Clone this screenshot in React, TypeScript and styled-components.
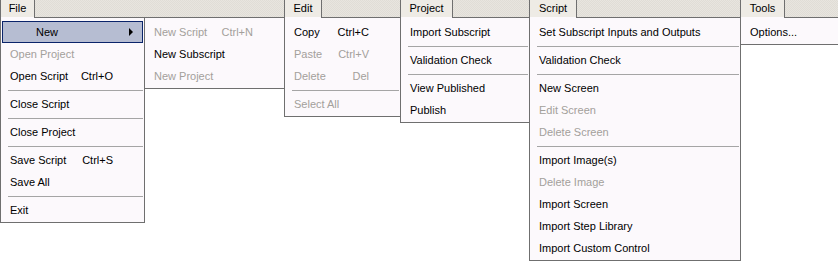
import React from 'react'
import styled, { createGlobalStyle } from 'styled-components'

const GlobalStyle = createGlobalStyle`
  body {
    margin: 0;
    background: #ffffff;
    font-family: "Liberation Sans", Arial, sans-serif;
    font-size: 11px;
    color: #000;
  }
`

interface IEntry {
  label?: string
  keys?: string
  off?: boolean
  sep?: boolean
  hot?: boolean
  sub?: boolean
}

interface IMenu {
  title: string
  tab: number
  width: number
  items: IEntry[]
}

const fileMenu: IMenu = {
  title: 'File',
  tab: 35,
  width: 145,
  items: [
    { label: 'New', hot: true, sub: true },
    { label: 'Open Project', off: true },
    { label: 'Open Script', keys: 'Ctrl+O' },
    { sep: true },
    { label: 'Close Script' },
    { sep: true },
    { label: 'Close Project' },
    { sep: true },
    { label: 'Save Script', keys: 'Ctrl+S' },
    { label: 'Save All' },
    { sep: true },
    { label: 'Exit' },
  ],
}

const newMenu: IEntry[] = [
  { label: 'New Script', keys: 'Ctrl+N', off: true },
  { label: 'New Subscript' },
  { label: 'New Project', off: true },
]

const menus: IMenu[] = [
  {
    title: 'Edit',
    tab: 38,
    width: 117,
    items: [
      { label: 'Copy', keys: 'Ctrl+C' },
      { label: 'Paste', keys: 'Ctrl+V', off: true },
      { label: 'Delete', keys: 'Del', off: true },
      { sep: true },
      { label: 'Select All', off: true },
    ],
  },
  {
    title: 'Project',
    tab: 53,
    width: 130,
    items: [
      { label: 'Import Subscript' },
      { sep: true },
      { label: 'Validation Check' },
      { sep: true },
      { label: 'View Published' },
      { label: 'Publish' },
    ],
  },
  {
    title: 'Script',
    tab: 48,
    width: 212,
    items: [
      { label: 'Set Subscript Inputs and Outputs' },
      { sep: true },
      { label: 'Validation Check' },
      { sep: true },
      { label: 'New Screen' },
      { label: 'Edit Screen', off: true },
      { label: 'Delete Screen', off: true },
      { sep: true },
      { label: 'Import Image(s)' },
      { label: 'Delete Image', off: true },
      { label: 'Import Screen' },
      { label: 'Import Step Library' },
      { label: 'Import Custom Control' },
    ],
  },
  {
    title: 'Tools',
    tab: 45,
    width: 99,
    items: [{ label: 'Options...' }],
  },
]

const Entries = ({ items }: { items: IEntry[] }) => (
  <>
    {items.map((item, i) => {
      if (item.sep) {
        return <Separator key={i} />
      }
      if (item.hot) {
        return (
          <HotItem key={i}>
            <span>{item.label}</span>
            {item.sub && <Arrow />}
          </HotItem>
        )
      }
      return (
        <Item key={i} $off={!!item.off}>
          <span>{item.label}</span>
          {item.keys && <span>{item.keys}</span>}
        </Item>
      )
    })}
  </>
)

export default function App() {
  return (
    <Page>
      <GlobalStyle />
      <Panel>
        <Bar>
          <Tab $w={fileMenu.tab}>{fileMenu.title}</Tab>
        </Bar>
        <DropRow>
          <Box $w={fileMenu.width}>
            <TopEdge $tab={fileMenu.tab} />
            <Entries items={fileMenu.items} />
          </Box>
          <Box $w={141}>
            <TopEdge $tab={0} />
            <Entries items={newMenu} />
          </Box>
        </DropRow>
      </Panel>
      {menus.map(menu => (
        <Panel key={menu.title}>
          <Bar>
            <Tab $w={menu.tab}>{menu.title}</Tab>
          </Bar>
          <DropRow>
            <Box $w={menu.width}>
              <TopEdge $tab={menu.tab} />
              <Entries items={menu.items} />
            </Box>
          </DropRow>
        </Panel>
      ))}
      <Filler />
    </Page>
  )
}

const Page = styled.div`
  display: flex;
  align-items: flex-start;
  width: 838px;
  height: 263px;
  overflow: hidden;
`

const Panel = styled.div`
  display: flex;
  flex-direction: column;
  flex: none;
  & + & {
    margin-left: -1px;
  }
`

const Bar = styled.div`
  height: 17px;
  display: flex;
  background: repeating-conic-gradient(#e8e5df 0 25%, #e0ddd6 0 50%) 0 0 / 2px 2px;
`

const Filler = styled(Bar)`
  flex: 1;
`

const Tab = styled.div<{ $w: number }>`
  width: ${p => p.$w}px;
  box-sizing: border-box;
  height: 17px;
  line-height: 17px;
  text-align: center;
  background: #eeebe5;
  border-left: 1px solid #6f6f6f;
  border-right: 1px solid #6f6f6f;
`

const DropRow = styled.div`
  display: flex;
  align-items: flex-start;
`

const Box = styled.div<{ $w: number }>`
  width: ${p => p.$w}px;
  box-sizing: border-box;
  background: #fcf9fc;
  border: 1px solid #6f6f6f;
  border-top: none;
  padding-bottom: 1px;
  display: flex;
  flex-direction: column;
  & + & {
    margin-left: -1px;
  }
`

const TopEdge = styled.div<{ $tab: number }>`
  height: 1px;
  margin: 0 -1px 3px;
  background: ${p =>
    p.$tab
      ? `linear-gradient(to right, transparent ${p.$tab - 1}px, #6f6f6f ${p.$tab - 1}px)`
      : '#6f6f6f'};
`

const Item = styled.div<{ $off: boolean }>`
  height: 22px;
  display: flex;
  align-items: center;
  justify-content: space-between;
  padding: 0 31px 0 9px;
  white-space: nowrap;
  color: ${p => (p.$off ? '#a3a09b' : '#000')};
`

const HotItem = styled.div`
  height: 22px;
  box-sizing: border-box;
  margin: 0 1px 0 1px;
  display: flex;
  align-items: center;
  justify-content: space-between;
  padding: 0 9px 0 33px;
  background: #b6bdd2;
  border: 1px solid #0a246a;
  white-space: nowrap;
`

const Arrow = styled.span`
  width: 0;
  height: 0;
  border-left: 4px solid #000;
  border-top: 4px solid transparent;
  border-bottom: 4px solid transparent;
`

const Separator = styled.div`
  height: 6px;
  display: flex;
  align-items: center;
  &::after {
    content: '';
    flex: 1;
    height: 1px;
    margin: 0 1px 0 7px;
    background: #a5a5a5;
  }
`
